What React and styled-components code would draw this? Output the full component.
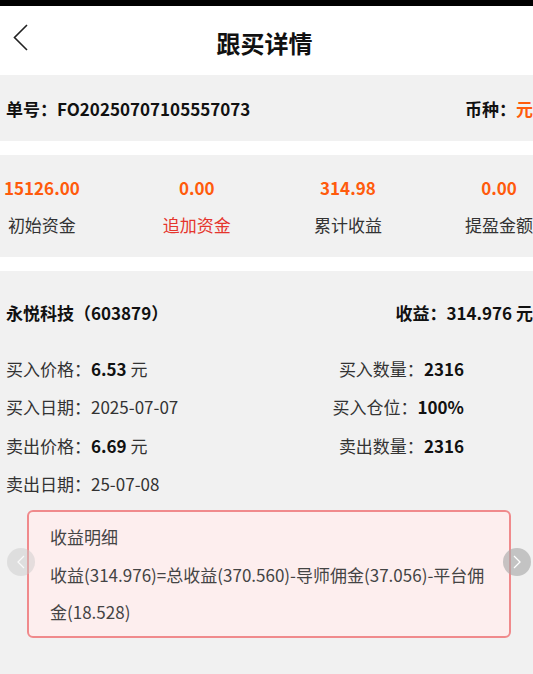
import React from 'react';
import styled, { createGlobalStyle } from 'styled-components';

const GlobalStyle = createGlobalStyle`
  html, body {
    margin: 0;
    padding: 0;
    background: #fff;
    overflow: hidden;
  }
  body {
    font-family: 'Noto Sans CJK SC', 'Noto Sans', sans-serif;
    color: #222;
  }
`;

const Page = styled.div`
  width: 533px;
  height: 674px;
  display: flex;
  flex-direction: column;
  overflow: hidden;
`;

const StatusBar = styled.div`
  height: 6px;
  background: #000;
  flex-shrink: 0;
`;

const Header = styled.header`
  height: 69px;
  display: grid;
  grid-template-columns: 40px 1fr 40px;
  align-items: center;
  flex-shrink: 0;
`;

const BackButton = styled.button`
  border: 0;
  background: none;
  padding: 0 0 6px 13px;
  display: flex;
  cursor: pointer;
`;

const Title = styled.h1`
  margin: 0;
  padding-top: 3px;
  padding-right: 4px;
  text-align: center;
  font-size: 24px;
  font-weight: 700;
  color: #111;
`;

const Band = styled.section`
  background: #f1f1f1;
  margin-top: ${(p) => p.$gap || 0}px;
  flex-shrink: 0;
`;

const OrderRow = styled.div`
  height: 66px;
  display: flex;
  align-items: center;
  justify-content: space-between;
  padding-left: 6px;
  font-size: 17px;
  font-weight: 700;
  color: #111;
  white-space: nowrap;
`;

const Accent = styled.span`
  color: #ff5b0c;
`;

const Stats = styled.div`
  height: 102px;
  box-sizing: border-box;
  display: flex;
  justify-content: space-between;
  padding: 21px 0 0 4px;
  white-space: nowrap;
`;

const Stat = styled.div`
  display: flex;
  flex-direction: column;
  align-items: center;
  gap: 13px;
`;

const StatValue = styled.div`
  font-size: 17px;
  line-height: 24px;
  font-weight: 700;
  color: #ff5b0c;
`;

const StatLabel = styled.div`
  font-size: 17px;
  line-height: 24px;
  color: ${(p) => (p.$highlight ? '#e5352d' : '#333')};
`;

const Detail = styled(Band)`
  flex: 1;
  padding-top: 30px;
`;

const StockHead = styled.div`
  display: flex;
  justify-content: space-between;
  padding-left: 6px;
  font-size: 17px;
  line-height: 24px;
  font-weight: 700;
  color: #111;
  white-space: nowrap;
`;

const InfoGrid = styled.div`
  display: grid;
  grid-template-columns: 1fr 1fr;
  grid-auto-rows: 38.5px;
  align-items: center;
  margin-top: 24px;
  padding: 0 69px 0 6px;
  font-size: 17px;
  color: #333;
  white-space: nowrap;
`;

const Info = styled.div`
  justify-self: ${(p) => (p.$right ? 'end' : 'start')};
`;

const Strong = styled.b`
  font-weight: 700;
  color: #111;
`;

const CardWrap = styled.div`
  position: relative;
  margin: 7px 22px 0 27px;
`;

const Card = styled.div`
  border: 2px solid #f08a8c;
  border-radius: 6px;
  background: #fdeeee;
  padding: 6px 20px 5px 21px;
  font-size: 17px;
  line-height: 37.5px;
  color: #444;
`;

const NavDot = styled.div`
  position: absolute;
  top: 38px;
  ${(p) => (p.$side === 'left' ? 'left: -20px;' : 'right: -20px;')}
  width: 28px;
  height: 28px;
  border-radius: 50%;
  background: ${(p) => (p.$side === 'left' ? 'rgba(200,200,200,0.45)' : 'rgba(170,170,170,0.65)')};
  display: flex;
  align-items: center;
  justify-content: center;
`;

const Chevron = ({ dir }) => (
  <svg width="8" height="14" viewBox="0 0 8 14">
    <polyline
      points={dir === 'left' ? '7,1 1,7 7,13' : '1,1 7,7 1,13'}
      fill="none"
      stroke="#fff"
      strokeWidth="1.3"
      opacity={dir === 'left' ? 0.8 : 1}
    />
  </svg>
);

const stats = [
  { value: '15126.00', label: '初始资金' },
  { value: '0.00', label: '追加资金', highlight: true },
  { value: '314.98', label: '累计收益' },
  { value: '0.00', label: '提盈金额' },
];

const App = () => {
  return (
    <Page>
      <GlobalStyle />
      <StatusBar />
      <Header>
        <BackButton aria-label="back">
          <svg width="15" height="27" viewBox="0 0 15 27">
            <polyline points="14,1 1.5,13.5 14,26" fill="none" stroke="#222" strokeWidth="1.6" />
          </svg>
        </BackButton>
        <Title>跟买详情</Title>
        <span />
      </Header>

      <Band>
        <OrderRow>
          <span>单号：FO20250707105557073</span>
          <span>
            币种：<Accent>元</Accent>
          </span>
        </OrderRow>
      </Band>

      <Band $gap={14}>
        <Stats>
          {stats.map((s) => (
            <Stat key={s.label}>
              <StatValue>{s.value}</StatValue>
              <StatLabel $highlight={s.highlight}>{s.label}</StatLabel>
            </Stat>
          ))}
        </Stats>
      </Band>

      <Detail $gap={14}>
        <StockHead>
          <span>永悦科技（603879）</span>
          <span>收益：314.976 元</span>
        </StockHead>
        <InfoGrid>
          <Info>
            买入价格：<Strong>6.53</Strong> 元
          </Info>
          <Info $right>
            买入数量：<Strong>2316</Strong>
          </Info>
          <Info>买入日期：2025-07-07</Info>
          <Info $right>
            买入仓位：<Strong>100%</Strong>
          </Info>
          <Info>
            卖出价格：<Strong>6.69</Strong> 元
          </Info>
          <Info $right>
            卖出数量：<Strong>2316</Strong>
          </Info>
          <Info>卖出日期：25-07-08</Info>
        </InfoGrid>
        <CardWrap>
          <Card>
            <div>收益明细</div>
            <div>收益(314.976)=总收益(370.560)-导师佣金(37.056)-平台佣金(18.528)</div>
          </Card>
          <NavDot $side="left">
            <Chevron dir="left" />
          </NavDot>
          <NavDot $side="right">
            <Chevron dir="right" />
          </NavDot>
        </CardWrap>
      </Detail>
    </Page>
  );
};

export default App;
